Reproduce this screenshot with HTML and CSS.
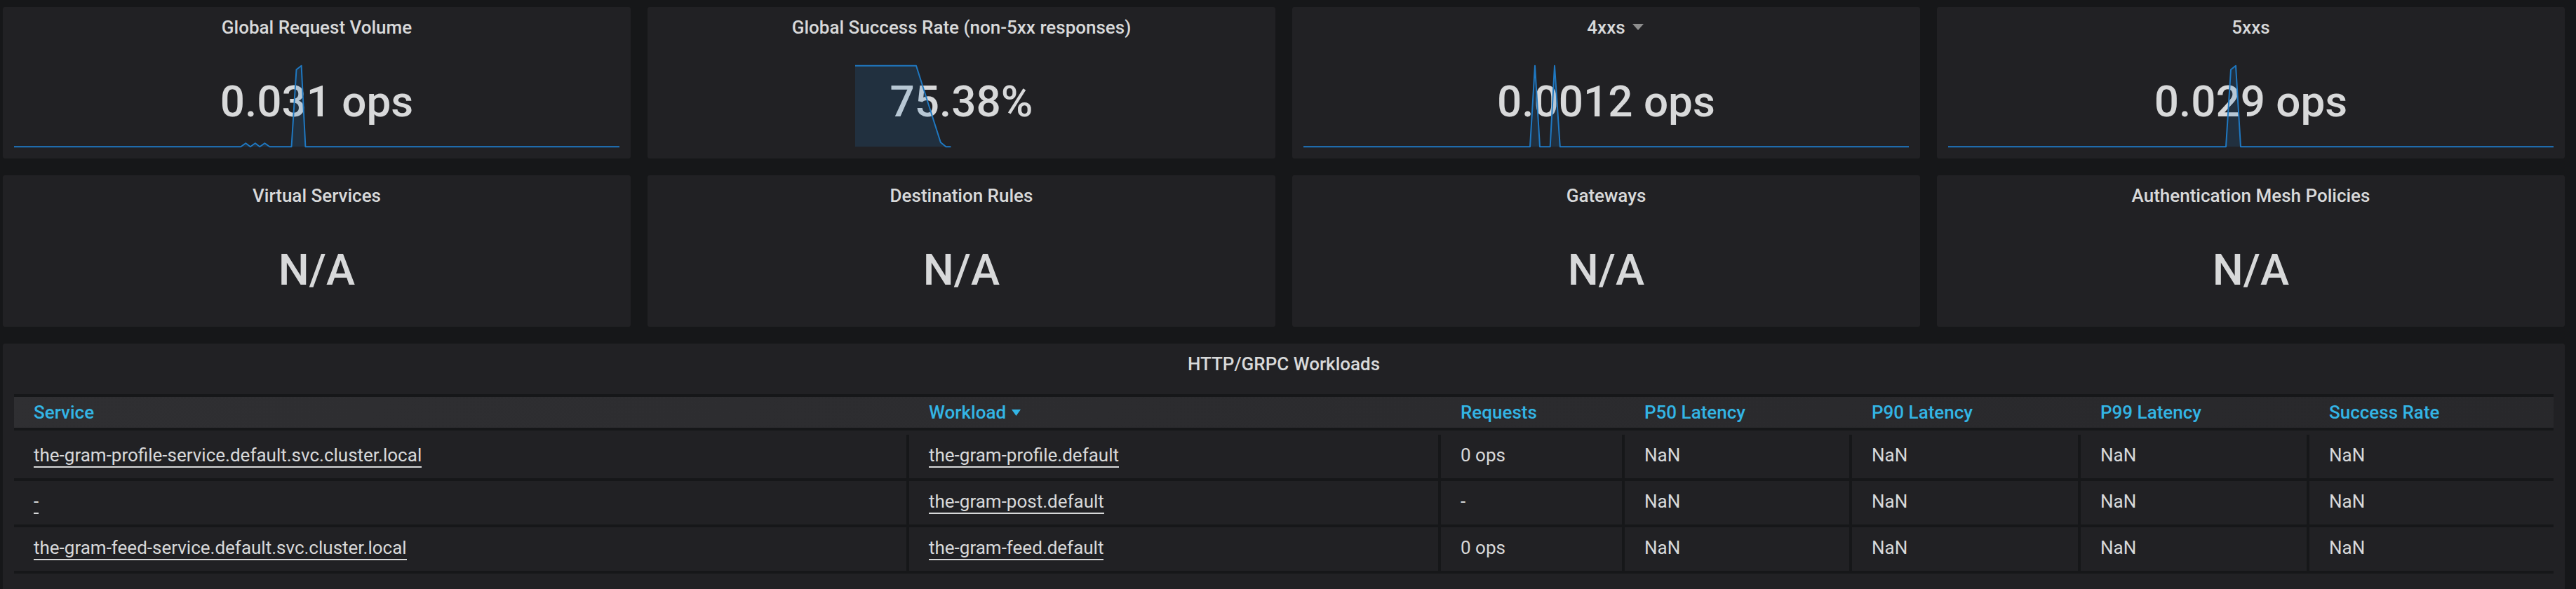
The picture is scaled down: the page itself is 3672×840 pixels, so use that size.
FILE: index.html
```html
<!DOCTYPE html>
<html>
<head>
<meta charset="utf-8">
<title>Istio Mesh Dashboard</title>
<link rel="stylesheet" href="styles.css">
</head>
<body>
<div class="dash">
  <div class="row">
    <div class="panel stat">
      <div class="title"><span class="t">Global Request Volume</span></div>
      <div class="value">0.031 ops</div>
      <svg class="spark" viewBox="0 0 863 118" preserveAspectRatio="none">
        <polygon class="fill" points="0,116.3 323.3,116.3 330.3,111.3 336.8,116.3 343.8,111.3 350.3,116.3 357.3,111.3 364.4,116.3 395.5,116.3 402.5,6.3 409.6,0.7 415.4,116.3 863,116.3"/>
        <polyline class="line" points="0,116.3 323.3,116.3 330.3,111.3 336.8,116.3 343.8,111.3 350.3,116.3 357.3,111.3 364.4,116.3 395.5,116.3 402.5,6.3 409.6,0.7 415.4,116.3 863,116.3"/>
      </svg>
    </div>
    <div class="panel stat">
      <div class="title"><span class="t">Global Success Rate (non-5xx responses)</span></div>
      <div class="value">75.38%</div>
      <svg class="spark" viewBox="0 0 863 118" preserveAspectRatio="none">
        <polygon class="fill" points="280,116.3 280,0.7 367,0.7 401.8,110 409.4,116.3 416.4,116.3"/>
        <polyline class="line" points="280,0.7 367,0.7 401.8,110 409.4,116.3 416.4,116.3"/>
      </svg>
    </div>
    <div class="panel stat">
      <div class="title"><span class="t">4xxs<svg class="menu-caret" viewBox="0 0 16 9"><polygon points="0,0 16,0 8,9"/></svg></span></div>
      <div class="value">0.0012 ops</div>
      <svg class="spark" viewBox="0 0 863 118" preserveAspectRatio="none">
        <polygon class="fill" points="0,116.3 323,116.3 330,0.7 337,116.3 351.7,116.3 358,0.7 365.8,116.3 863,116.3"/>
        <polyline class="line" points="0,116.3 323,116.3 330,0.7 337,116.3 351.7,116.3 358,0.7 365.8,116.3 863,116.3"/>
      </svg>
    </div>
    <div class="panel stat">
      <div class="title"><span class="t">5xxs</span></div>
      <div class="value">0.029 ops</div>
      <svg class="spark" viewBox="0 0 863 118" preserveAspectRatio="none">
        <polygon class="fill" points="0,116.3 396,116.3 403,6.3 410,0.7 417,116.3 863,116.3"/>
        <polyline class="line" points="0,116.3 396,116.3 403,6.3 410,0.7 417,116.3 863,116.3"/>
      </svg>
    </div>
  </div>

  <div class="row">
    <div class="panel stat">
      <div class="title"><span class="t">Virtual Services</span></div>
      <div class="value">N/A</div>
    </div>
    <div class="panel stat">
      <div class="title"><span class="t">Destination Rules</span></div>
      <div class="value">N/A</div>
    </div>
    <div class="panel stat">
      <div class="title"><span class="t">Gateways</span></div>
      <div class="value">N/A</div>
    </div>
    <div class="panel stat">
      <div class="title"><span class="t">Authentication Mesh Policies</span></div>
      <div class="value">N/A</div>
    </div>
  </div>

  <div class="panel table-panel">
    <div class="title"><span class="t">HTTP/GRPC Workloads</span></div>
    <div class="table">
      <div class="thead">
        <div class="th">Service</div>
        <div class="th">Workload<svg class="sort-caret" viewBox="0 0 13 9"><polygon points="0,0 13,0 6.5,9"/></svg></div>
        <div class="th">Requests</div>
        <div class="th">P50 Latency</div>
        <div class="th">P90 Latency</div>
        <div class="th">P99 Latency</div>
        <div class="th">Success Rate</div>
      </div>
      <div class="tbody">
        <div class="tr">
          <div class="td"><span class="link">the-gram-profile-service.default.svc.cluster.local</span></div>
          <div class="td"><span class="link">the-gram-profile.default</span></div>
          <div class="td">0 ops</div>
          <div class="td">NaN</div>
          <div class="td">NaN</div>
          <div class="td">NaN</div>
          <div class="td">NaN</div>
        </div>
        <div class="tr">
          <div class="td"><span class="link">-</span></div>
          <div class="td"><span class="link">the-gram-post.default</span></div>
          <div class="td">-</div>
          <div class="td">NaN</div>
          <div class="td">NaN</div>
          <div class="td">NaN</div>
          <div class="td">NaN</div>
        </div>
        <div class="tr">
          <div class="td"><span class="link">the-gram-feed-service.default.svc.cluster.local</span></div>
          <div class="td"><span class="link">the-gram-feed.default</span></div>
          <div class="td">0 ops</div>
          <div class="td">NaN</div>
          <div class="td">NaN</div>
          <div class="td">NaN</div>
          <div class="td">NaN</div>
        </div>
      </div>
    </div>
  </div>
</div>
</body>
</html>
```

FILE: styles.css
```css
* {
  box-sizing: border-box;
}

html, body {
  margin: 0;
  padding: 0;
}

body {
  background: #161719;
  height: 840px;
  overflow: hidden;
  font-family: Roboto, "Helvetica Neue", "Liberation Sans", Arial, sans-serif;
  color: #d8d9da;
}

.dash {
  padding: 10px 16px 0 4px;
  display: flex;
  flex-direction: column;
  gap: 24px;
}

.row {
  display: grid;
  grid-template-columns: repeat(4, 1fr);
  gap: 24px;
}

.panel {
  background: #212124;
  border-radius: 3px;
  position: relative;
}

.stat {
  height: 216px;
}

.title {
  font-size: 26px;
  font-weight: 500;
  line-height: 30px;
  height: 44px;
  padding-top: 14px;
  text-align: center;
  white-space: nowrap;
}

.title .t {
  display: inline-block;
  position: relative;
}

.menu-caret {
  position: absolute;
  left: calc(100% + 10px);
  top: 10px;
  width: 16px;
  height: 9px;
  fill: #8e8e8e;
}

.value {
  font-size: 62px;
  font-weight: 500;
  line-height: 72px;
  margin-top: 55px;
  text-align: center;
  white-space: nowrap;
}

.spark {
  position: absolute;
  left: 16px;
  bottom: 15px;
  width: calc(100% - 32px);
  height: 118px;
  overflow: visible;
}

.spark .fill {
  fill: rgba(31, 118, 189, 0.18);
  stroke: none;
}

.spark .line {
  fill: none;
  stroke: #1f78c1;
  stroke-width: 2;
  stroke-linejoin: round;
}

.table-panel {
  height: 420px;
  padding: 0 16px;
}

.table {
  margin-top: 28px;
}

.thead,
.tr {
  display: grid;
  grid-template-columns: 1276px 758px 262px 324px 326px 326px 1fr;
}

.thead {
  border-top: 4px solid #161719;
  border-bottom: 4px solid #161719;
  background: linear-gradient(135deg, #2f2f32, #28282b);
}

.th {
  height: 44px;
  line-height: 43px;
  padding-top: 1px;
  padding-left: 28px;
  font-size: 26px;
  font-weight: 500;
  color: #33b5e5;
  white-space: nowrap;
}

.sort-caret {
  width: 13px;
  height: 9px;
  margin-left: 8px;
  vertical-align: 4px;
  fill: #33b5e5;
}

.tbody {
  padding-top: 6px;
}

.tr {
  border-bottom: 4px solid #161719;
}

.td {
  height: 62px;
  line-height: 58px;
  padding-left: 28px;
  font-size: 26px;
  border-right: 4px solid #161719;
  white-space: nowrap;
  overflow: hidden;
}

.td:last-child {
  border-right: none;
}

.link {
  border-bottom: 2px solid #d8d9da;
  padding-bottom: 1px;
}
```
